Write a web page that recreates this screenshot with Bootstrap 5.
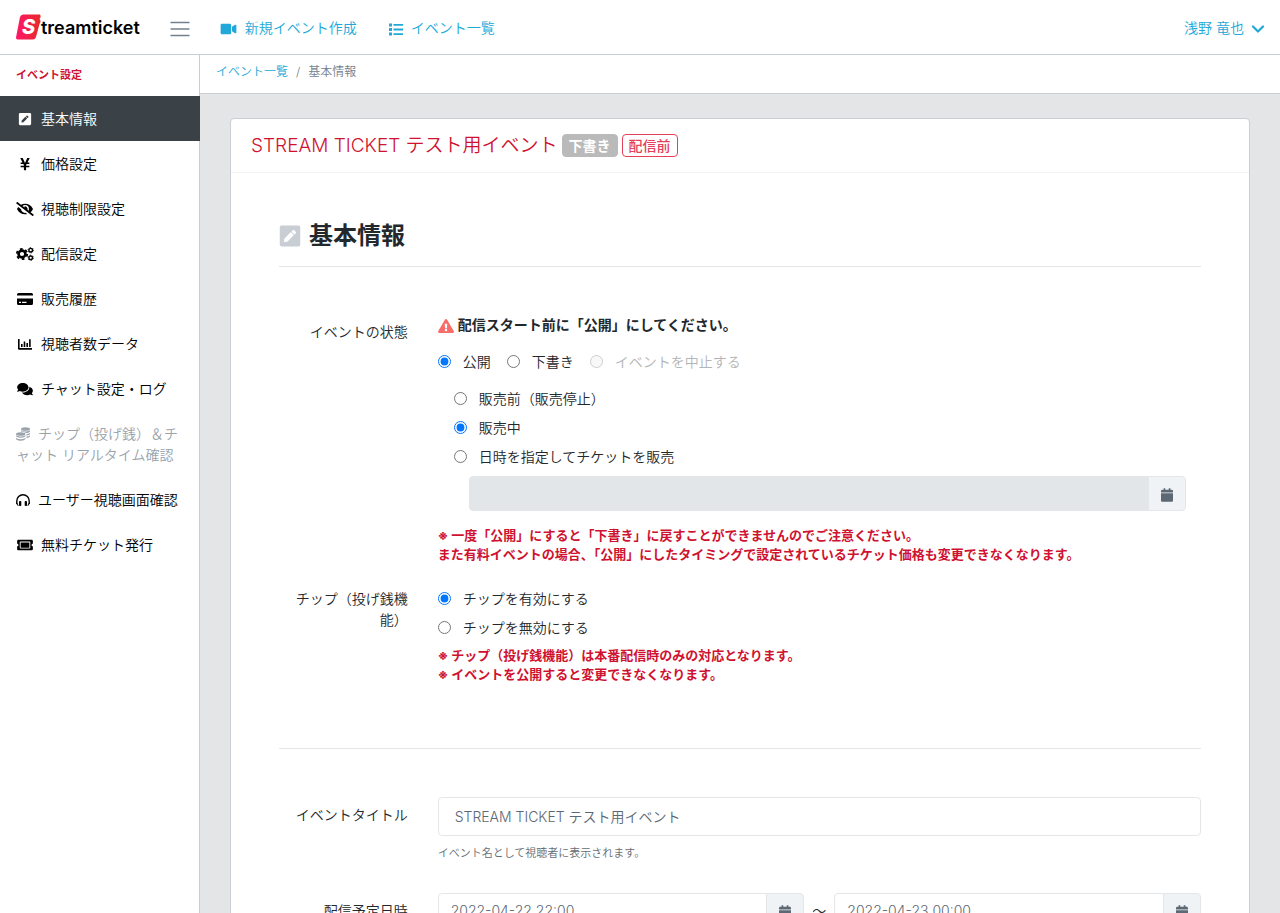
<!DOCTYPE html>
<html lang="ja">
<head>
<meta charset="utf-8">
<meta name="viewport" content="width=device-width, initial-scale=1">
<title>基本情報 | Streamticket</title>
<link href="https://cdn.jsdelivr.net/npm/bootstrap@5.3.0/dist/css/bootstrap.min.css" rel="stylesheet">
<style>
:root { --line: #c8ced3; --soft: #e4e7ea; --brand: #20a8d8; --alert: #cf1230; --muted: #73818f; }
body { font: 350 14px/21px Inter, "Noto Sans CJK JP", sans-serif; color: #23282c; background: #e4e5e6; }
a { color: var(--brand); text-decoration: none; }
svg { fill: currentColor; }
.app-header { height: 55px; border-bottom: 1px solid var(--line); }
.logo-word { font-size: 18px; font-weight: 600; color: #000; }
.menu-toggle { color: var(--muted); }
.side-menu { width: 200px; border-right: 1px solid var(--line); }
.side-title { font-size: 11px; font-weight: 700; color: var(--alert); padding: 10px 16px; }
.side-link { display: block; padding: 12px 16px; color: #000; word-break: break-all; line-break: anywhere; }
.side-link svg { width: 18px; height: 14px; margin-right: 7px; vertical-align: -2px; }
.side-link svg.narrow { width: 14px; margin-right: 8px; }
.side-link.current { background: #3a4248; color: #fff; width: 200px; }
.side-link.off { color: #9aa3ac; }
.main-pane { overflow: auto; scrollbar-width: none; }
.crumbs { font-size: 12px; line-height: 18px; padding: 8px 16px 12px; border-bottom: 1px solid var(--line); color: var(--muted); }
.page-card { margin: 24px 30px; background: #fff; border: 1px solid var(--line); border-radius: 4px; }
.page-card-head { padding: 15px 20px; border-bottom: 1px solid #f0f3f5; }
.page-card-head h1 { font-size: 19px; line-height: 23px; font-weight: 350; color: var(--alert); }
.state-tag { font-size: 14px; line-height: 21px; font-weight: 700; padding: 0 6px; border: 1px solid #bababa; border-radius: 4px; background: #bababa; color: #fff; }
.state-tag.outline { background: #fff; border-color: #e4405c; color: #e4405c; font-weight: 500; }
.page-card-body { padding: 45px 48px 48px; }
.section-title { font-size: 24px; line-height: 36px; font-weight: 700; padding-bottom: 12px; margin-bottom: 47px; border-bottom: 1px solid var(--soft); }
.section-title svg { color: #c8ced3; }
.form-row { --bs-gutter-x: 30px; }
.form-row.spaced { margin-bottom: 20px; }
.form-row > .label-col { text-align: right; padding-top: 7px; }
.form-row > .label-col.with-choice { padding-top: 4px; }
.notice { font-weight: 700; margin-bottom: 12px; }
.notice svg { color: #f86c6b; }
.choice input { width: 13px; height: 13px; margin: 0 12px 0 0; }
.choice { display: flex; align-items: center; height: 29px; }
.choice label.off { color: #b3b6b8; }
.sale-options { padding: 0 15px 0 16px; }
.sale-date { padding-left: 15px; margin-top: 5px; }
.caution { color: var(--alert); font-size: 13px; line-height: 19px; font-weight: 700; margin: 15px 0 0; }
.section-rule { margin: 64px 0 48px; border-color: var(--soft); opacity: 1; }
.field { border: 1px solid var(--soft); color: #5c6873; font-size: 14px; font-weight: 350; line-height: 21px; padding: 6px 12px; border-radius: 4px; }
.field.tall { padding: 8px 16px; }
.field:disabled { background: #e2e6e9; }
.cal-btn { border: 1px solid var(--soft); background: #f0f3f5; color: #5c6873; width: 38px; padding: 0; border-radius: 4px; }
.help-text { font-size: 11px; line-height: 16px; color: #666c72; margin-top: 9px; }
</style>
</head>
<body class="vh-100 d-flex flex-column overflow-hidden">
<svg class="d-none" aria-hidden="true">
  <symbol id="pen" viewBox="0 0 448 512"><path d="M400 480H48c-26.500 0-48-21.500-48-48V80c0-26.500 21.500-48 48-48h352c26.500 0 48 21.500 48 48v352c0 26.500-21.500 48-48 48zM238.100 177.900L102.400 313.600l-6.300 57.100c-.8 7.600 5.600 14.100 13.300 13.300l57.100-6.300L302.200 242c2.300-2.300 2.300-6.100 0-8.500L246.700 178c-2.500-2.400-6.300-2.400-8.600-.1zM345 165.100L314.900 135c-9.400-9.400-24.600-9.400-33.900 0l-23.100 23.100c-2.300 2.300-2.300 6.100 0 8.500l55.500 55.500c2.300 2.300 6.100 2.300 8.500 0L345 199c9.300-9.300 9.300-24.500 0-33.900z"/></symbol>
  <symbol id="calendar" viewBox="0 0 448 512"><path d="M12 192h424c6.600 0 12 5.400 12 12v260c0 26.500-21.500 48-48 48H48c-26.500 0-48-21.500-48-48V204c0-6.600 5.400-12 12-12zm436-44v-36c0-26.500-21.500-48-48-48h-48V12c0-6.600-5.400-12-12-12h-40c-6.600 0-12 5.400-12 12v52H160V12c0-6.600-5.400-12-12-12h-40c-6.600 0-12 5.400-12 12v52H48C21.500 64 0 85.500 0 112v36c0 6.600 5.400 12 12 12h424c6.600 0 12-5.400 12-12z"/></symbol>
</svg>

<header class="app-header bg-white d-flex align-items-center flex-shrink-0 px-3">
  <a href="#" class="d-flex align-items-center" aria-label="Streamticket">
    <svg width="25" height="26" viewBox="0 0 25 26"><defs><linearGradient id="lg" x1="0" x2="1"><stop offset="0" stop-color="#ff1767"/><stop offset="1" stop-color="#e62b2b"/></linearGradient></defs><path fill="url(#lg)" d="M7 0.500H24Q25.500 3 23.500 5Q25.500 7 23.500 10L20 23Q19 25.500 17 25.500H1.500Q0 25.500 0 23.500L4 3Q5 .5 7 .5Z"/><text x="6" y="20" font-family="Inter" font-size="20" font-weight="800" font-style="italic" fill="#fff">S</text></svg>
    <span class="logo-word">treamticket</span>
  </a>
  <button class="btn menu-toggle border-0 p-0 ms-4" type="button" aria-label="メニュー"><svg width="32" height="20" viewBox="0 0 32 20"><path d="M7 3.500h18M7 10h18M7 16.500h18" stroke="currentColor" stroke-width="1.300" stroke-linecap="round"/></svg></button>
  <nav class="d-flex flex-grow-1 ms-4">
    <a href="#" class="me-4 pe-2"><svg class="me-1" width="17" height="14" viewBox="0 0 576 512"><path d="M336 64H48C21 64 0 85 0 112v288c0 27 21 48 48 48h288c27 0 48-21 48-48V112c0-27-21-48-48-48zm190 38L416 177v158l110 75c21 15 50 0 50-26V128c0-26-29-41-50-26z"/></svg> 新規イベント作成</a>
    <a href="#"><svg class="me-1" width="14" height="14" viewBox="0 0 14 14"><path d="M0 1.500h3v3H0zM0 6h3v3H0zM0 10.500h3v3H0zM4.500 2h9.500v1.800H4.500zM4.500 6.600H14v1.800H4.500zM4.500 11.200H14V13H4.500z"/></svg> イベント一覧</a>
  </nav>
  <a href="#">浅野 竜也<svg class="ms-2" width="12" height="12" viewBox="0 0 12 12"><path d="M1 3.500l5 5 5-5" fill="none" stroke="currentColor" stroke-width="2.200" stroke-linecap="round" stroke-linejoin="round"/></svg></a>
</header>

<div class="d-flex flex-grow-1 overflow-hidden">
  <aside class="side-menu bg-white flex-shrink-0">
    <div class="side-title">イベント設定</div>
    <nav>
      <a href="#" class="side-link current"><svg><use href="#pen"/></svg>基本情報</a>
      <a href="#" class="side-link"><svg viewBox="0 0 384 512"><path d="M351 32h-65c-5 0-9 3-11 7l-55 113c-15 35-27 72-27 72h-2s-12-37-27-72L109 39c-2-4-6-7-11-7H33c-9 0-15 10-11 18l80 150H44c-7 0-12 5-12 12v32c0 7 5 12 12 12h88l20 37v27H44c-7 0-12 5-12 12v32c0 7 5 12 12 12h108v92c0 7 5 12 12 12h56c7 0 12-5 12-12v-92h108c7 0 12-5 12-12v-32c0-7-5-12-12-12H232v-27l20-37h88c7 0 12-5 12-12v-32c0-7-5-12-12-12h-58l80-150c4-8-2-18-11-18z"/></svg>価格設定</a>
      <a href="#" class="side-link"><svg viewBox="0 0 640 512"><path d="M320 400c-75.850 0-137.250-58.710-142.900-133.110L72.200 185.820c-13.790 17.300-26.480 35.590-36.720 55.590a32.350 32.350 0 0 0 0 29.190C89.710 376.410 197.070 448 320 448c26.910 0 52.870-4 77.890-10.460L346 397.390a144.130 144.130 0 0 1-26 2.610zm313.820 58.100l-110.550-85.440a331.250 331.250 0 0 0 81.250-102.070 32.350 32.350 0 0 0 0-29.190C550.290 135.590 442.930 64 320 64a308.150 308.150 0 0 0-147.320 37.700L45.460 3.370A16 16 0 0 0 23 6.180L3.370 31.450A16 16 0 0 0 6.180 53.900l588.360 454.730a16 16 0 0 0 22.460-2.810l19.640-25.270a16 16 0 0 0-2.820-22.450zm-183.720-142l-39.300-30.380A94.750 94.750 0 0 0 416 256a94.760 94.760 0 0 0-121.310-92.210A47.650 47.650 0 0 1 304 192a46.640 46.640 0 0 1-1.540 10l-73.610-56.890A142.310 142.310 0 0 1 320 112a143.920 143.920 0 0 1 144 144c0 21.630-5.290 41.790-13.900 60.110z"/></svg>視聴制限設定</a>
      <a href="#" class="side-link"><svg viewBox="0 0 18 14"><g fill="none" stroke="currentColor"><circle cx="6" cy="7" r="3.400" stroke-width="2.600"/><circle cx="6" cy="7" r="5.200" stroke-width="1.800" stroke-dasharray="2.700 2.745"/><circle cx="14.700" cy="3.200" r="1.800" stroke-width="1.400"/><circle cx="14.700" cy="3.200" r="2.700" stroke-width=".8" stroke-dasharray="1.400 1.427"/><circle cx="14.700" cy="10.800" r="1.800" stroke-width="1.400"/><circle cx="14.700" cy="10.800" r="2.700" stroke-width=".8" stroke-dasharray="1.400 1.427"/></g></svg>配信設定</a>
      <a href="#" class="side-link"><svg viewBox="0 0 18 14"><path fill-rule="evenodd" d="M1 3.500V2.500Q1 1 2.500 1h13Q17 1 17 2.500v1zM1 6.500h16v5Q17 13 15.500 13h-13Q1 13 1 11.500zM3 9.700v1.300h2V9.700zM6 9.700v1.300h4.500V9.700z"/></svg>販売履歴</a>
      <a href="#" class="side-link"><svg viewBox="0 0 18 14"><path d="M2 2h1.600v9H16v1.700H3Q2 12.700 2 11.700zM5 7h1.600v3H5zM7.700 4.500h1.600V10H7.700zM10.400 6H12v4h-1.600zM13.100 2.300h1.600V10h-1.600z"/></svg>視聴者数データ</a>
      <a href="#" class="side-link"><svg viewBox="0 0 576 512"><path d="M416 192c0-88-93-160-208-160S0 104 0 192c0 34 14 66 38 92-13 30-36 54-36 54-2 3-3 6-1 9s4 5 7 5c37 0 67-12 89-25 32 16 70 25 111 25 115 0 208-72 208-160zm122 220c24-26 38-58 38-92 0-67-54-124-129-148 1 7 1 13 1 20 0 106-108 192-240 192-11 0-21-1-32-2 32 58 106 98 192 98 41 0 79-9 111-25 22 13 52 25 89 25 3 0 6-2 7-5 1-3 1-6-1-9 0 0-23-24-36-54z"/></svg>チャット設定・ログ</a>
      <a href="#" class="side-link off" aria-disabled="true"><svg class="narrow" viewBox="0 0 14 14"><ellipse cx="9.500" cy="2" rx="4.500" ry="1.800"/><path d="M5 3.300q4.500 2.500 9 0v1.200q-1 1.500-4 1.500Q8 4.300 5 4.400zM10.500 7q2.500 0 3.500-1.200V7q-1 1.400-3.500 1.600zM10.500 9.600q2.500-.2 3.500-1.300v1.300q-1 1.300-3.500 1.500z"/><ellipse cx="4.700" cy="7" rx="4.700" ry="1.800"/><path d="M0 8.300q4.700 2.500 9.400 0v1.200q-4.700 2.600-9.400 0zM0 11q4.700 2.500 9.400 0v1.200q-4.700 3-9.400 0z"/></svg>チップ（投げ銭）＆チャット リアルタイム確認</a>
      <a href="#" class="side-link"><svg class="narrow" viewBox="0 0 14 14"><path d="M.8 11V8a6.200 6.200 0 0 1 12.400 0v3" fill="none" stroke="currentColor" stroke-width="1.400"/><rect x="3" y="8" width="2.300" height="5" rx=".8"/><rect x="8.700" y="8" width="2.300" height="5" rx=".8"/><path d="M.3 10.500Q1 12.500 2.500 13V12Q1.500 11.500 1.500 10zM13.700 10.500Q13 12.500 11.500 13V12Q12.500 11.500 12.500 10z"/></svg>ユーザー視聴画面確認</a>
      <a href="#" class="side-link"><svg viewBox="0 0 576 512"><path d="M128 160h320v192H128V160zm400 96c0 27 21 48 48 48v96c0 27-21 48-48 48H48c-27 0-48-21-48-48v-96c27 0 48-21 48-48s-21-48-48-48v-96c0-27 21-48 48-48h480c27 0 48 21 48 48v96c-27 0-48 21-48 48zm-48-104c0-13-11-24-24-24H120c-13 0-24 11-24 24v208c0 13 11 24 24 24h336c13 0 24-11 24-24V152z"/></svg>無料チケット発行</a>
    </nav>
  </aside>

  <main class="main-pane flex-grow-1">
    <nav class="crumbs bg-white" aria-label="パンくず"><a href="#">イベント一覧</a><span class="mx-2">/</span><span>基本情報</span></nav>
    <section class="page-card">
      <div class="page-card-head d-flex align-items-center gap-1">
        <h1 class="m-0">STREAM TICKET テスト用イベント</h1>
        <span class="state-tag">下書き</span>
        <span class="state-tag outline">配信前</span>
      </div>
      <form class="page-card-body">
        <h2 class="section-title d-flex align-items-center"><svg class="me-2" width="22" height="24" viewBox="0 0 448 512"><use href="#pen"/></svg>基本情報</h2>

        <div class="row form-row spaced">
          <div class="col-2 label-col">イベントの状態</div>
          <div class="col-10">
            <div class="notice"><svg class="me-1" width="16" height="14" viewBox="0 0 576 512"><path d="M570 440c18 32-5 72-42 72H48c-37 0-60-40-42-72L246 24c19-32 65-32 84 0l240 416zM288 354a46 46 0 1 0 0 92 46 46 0 0 0 0-92zm-44-165l8 136c0 6 5 11 12 11h48c7 0 12-5 12-11l8-136c0-7-5-13-12-13h-64c-7 0-12 6-12 13z"/></svg>配信スタート前に「公開」にしてください。</div>
            <div class="d-flex gap-3 mb-2">
              <div class="choice"><input type="radio" name="state" id="s1" checked><label for="s1">公開</label></div>
              <div class="choice"><input type="radio" name="state" id="s2"><label for="s2">下書き</label></div>
              <div class="choice"><input type="radio" name="state" id="s3" disabled><label for="s3" class="off">イベントを中止する</label></div>
            </div>
            <div class="sale-options">
              <div class="choice"><input type="radio" name="sale" id="a1"><label for="a1">販売前（販売停止）</label></div>
              <div class="choice"><input type="radio" name="sale" id="a2" checked><label for="a2">販売中</label></div>
              <div class="choice"><input type="radio" name="sale" id="a3"><label for="a3">日時を指定してチケットを販売</label></div>
              <div class="input-group sale-date"><input class="form-control field" type="text" aria-label="販売開始日時" disabled><button class="btn cal-btn" type="button" aria-label="日付を選択"><svg width="12" height="14"><use href="#calendar"/></svg></button></div>
            </div>
            <p class="caution">※ 一度「公開」にすると「下書き」に戻すことができませんのでご注意ください。<br>また有料イベントの場合、「公開」にしたタイミングで設定されているチケット価格も変更できなくなります。</p>
          </div>
        </div>

        <div class="row form-row">
          <div class="col-2 label-col with-choice">チップ（投げ銭機能）</div>
          <div class="col-10">
            <div class="choice"><input type="radio" name="tip" id="t1" checked><label for="t1">チップを有効にする</label></div>
            <div class="choice"><input type="radio" name="tip" id="t2"><label for="t2">チップを無効にする</label></div>
            <p class="caution mt-1">※ チップ（投げ銭機能）は本番配信時のみの対応となります。<br>※ イベントを公開すると変更できなくなります。</p>
          </div>
        </div>

        <hr class="section-rule">

        <div class="row form-row mb-4 pb-2">
          <label class="col-2 label-col" for="title">イベントタイトル</label>
          <div class="col-10">
            <input class="form-control field tall" id="title" type="text" value="STREAM TICKET テスト用イベント">
            <div class="help-text">イベント名として視聴者に表示されます。</div>
          </div>
        </div>

        <div class="row form-row">
          <label class="col-2 label-col" for="from">配信予定日時</label>
          <div class="col-10 d-flex align-items-center">
            <div class="input-group"><input class="form-control field" id="from" type="text" value="2022-04-22 22:00"><button class="btn cal-btn" type="button" aria-label="開始日を選択"><svg width="12" height="14"><use href="#calendar"/></svg></button></div>
            <span class="px-2">〜</span>
            <div class="input-group"><input class="form-control field" type="text" aria-label="終了日時" value="2022-04-23 00:00"><button class="btn cal-btn" type="button" aria-label="終了日を選択"><svg width="12" height="14"><use href="#calendar"/></svg></button></div>
          </div>
        </div>
      </form>
    </section>
  </main>
</div>
<script src="https://cdn.jsdelivr.net/npm/bootstrap@5.3.0/dist/js/bootstrap.bundle.min.js"></script>
</body>
</html>
